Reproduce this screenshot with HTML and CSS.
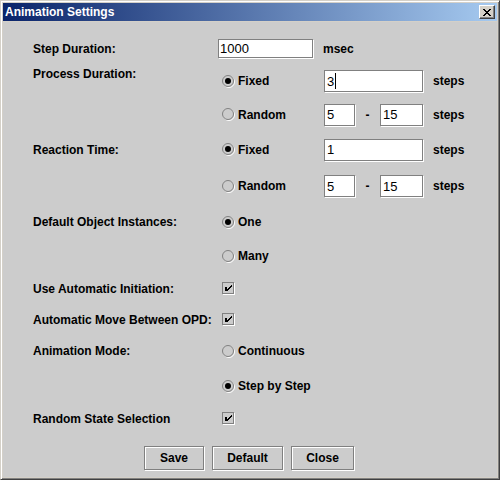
FILE: index.html
```html
<!DOCTYPE html>
<html>
<head>
<meta charset="utf-8">
<link rel="stylesheet" href="styles.css">
</head>
<body>
<div class="window">
  <div class="titlebar">
    <span class="title">Animation Settings</span>
    <span class="close"><svg width="8" height="7" viewBox="0 0 8 7" shape-rendering="crispEdges"><path d="M0 0h2v1H0z M6 0h2v1H6z M1 1h2v1H1z M5 1h2v1H5z M2 2h4v1H2z M3 3h2v1H3z M2 4h4v1H2z M1 5h2v1H1z M5 5h2v1H5z M0 6h2v1H0z M6 6h2v1H6z" fill="#000"/></svg></span>
  </div>
  <div class="content">
    <div class="form">
      <div class="lbl">Step Duration:</div>
      <div class="c2"><div class="field f-step">1000</div></div>
      <div class="c3 unit msec">msec</div>

      <div class="lbl top">Process Duration:</div>
      <div class="c2 opt"><svg class="radio" width="13" height="13" viewBox="0 0 13 13"><circle cx="7" cy="7" r="5.5" fill="none" stroke="#fff"/><circle cx="6" cy="6" r="5.5" fill="#ccc" stroke="#808080"/><circle cx="6" cy="6" r="3" fill="#000"/></svg><span>Fixed</span></div>
      <div class="c3"><div class="field f-wide">3<span class="caret"></span></div></div>
      <div class="c4 unit">steps</div>

      <div class="c2 opt"><svg class="radio" width="13" height="13" viewBox="0 0 13 13"><circle cx="7" cy="7" r="5.5" fill="none" stroke="#fff"/><circle cx="6" cy="6" r="5.5" fill="#ccc" stroke="#808080"/></svg><span>Random</span></div>
      <div class="c3 range"><div class="field f-min">5</div><span class="dash">-</span><div class="field f-max">15</div></div>
      <div class="c4 unit">steps</div>

      <div class="lbl">Reaction Time:</div>
      <div class="c2 opt"><svg class="radio" width="13" height="13" viewBox="0 0 13 13"><circle cx="7" cy="7" r="5.5" fill="none" stroke="#fff"/><circle cx="6" cy="6" r="5.5" fill="#ccc" stroke="#808080"/><circle cx="6" cy="6" r="3" fill="#000"/></svg><span>Fixed</span></div>
      <div class="c3"><div class="field f-wide">1</div></div>
      <div class="c4 unit">steps</div>

      <div class="c2 opt"><svg class="radio" width="13" height="13" viewBox="0 0 13 13"><circle cx="7" cy="7" r="5.5" fill="none" stroke="#fff"/><circle cx="6" cy="6" r="5.5" fill="#ccc" stroke="#808080"/></svg><span>Random</span></div>
      <div class="c3 range"><div class="field f-min">5</div><span class="dash">-</span><div class="field f-max">15</div></div>
      <div class="c4 unit">steps</div>

      <div class="lbl">Default Object Instances:</div>
      <div class="cspan opt"><svg class="radio" width="13" height="13" viewBox="0 0 13 13"><circle cx="7" cy="7" r="5.5" fill="none" stroke="#fff"/><circle cx="6" cy="6" r="5.5" fill="#ccc" stroke="#808080"/><circle cx="6" cy="6" r="3" fill="#000"/></svg><span>One</span></div>

      <div class="cspan opt"><svg class="radio" width="13" height="13" viewBox="0 0 13 13"><circle cx="7" cy="7" r="5.5" fill="none" stroke="#fff"/><circle cx="6" cy="6" r="5.5" fill="#ccc" stroke="#808080"/></svg><span>Many</span></div>

      <div class="lbl">Use Automatic Initiation:</div>
      <div class="cspan opt"><svg class="check" width="13" height="13" viewBox="0 0 13 13" shape-rendering="crispEdges"><rect x="1.5" y="1.5" width="11" height="11" fill="none" stroke="#fff"/><rect x="0.5" y="0.5" width="11" height="11" fill="#ccc" stroke="#808080"/><path d="M3 5h2v4H3z M9 3h1v2H9z M8 4h1v2H8z M7 5h1v2H7z M6 6h1v2H6z M5 7h1v2H5z" fill="#000"/></svg></div>

      <div class="lbl">Automatic Move Between OPD:</div>
      <div class="cspan opt"><svg class="check" width="13" height="13" viewBox="0 0 13 13" shape-rendering="crispEdges"><rect x="1.5" y="1.5" width="11" height="11" fill="none" stroke="#fff"/><rect x="0.5" y="0.5" width="11" height="11" fill="#ccc" stroke="#808080"/><path d="M3 5h2v4H3z M9 3h1v2H9z M8 4h1v2H8z M7 5h1v2H7z M6 6h1v2H6z M5 7h1v2H5z" fill="#000"/></svg></div>

      <div class="lbl">Animation Mode:</div>
      <div class="cspan opt"><svg class="radio" width="13" height="13" viewBox="0 0 13 13"><circle cx="7" cy="7" r="5.5" fill="none" stroke="#fff"/><circle cx="6" cy="6" r="5.5" fill="#ccc" stroke="#808080"/></svg><span>Continuous</span></div>

      <div class="cspan opt"><svg class="radio" width="13" height="13" viewBox="0 0 13 13"><circle cx="7" cy="7" r="5.5" fill="none" stroke="#fff"/><circle cx="6" cy="6" r="5.5" fill="#ccc" stroke="#808080"/><circle cx="6" cy="6" r="3" fill="#000"/></svg><span>Step by Step</span></div>

      <div class="lbl">Random State Selection</div>
      <div class="cspan opt"><svg class="check" width="13" height="13" viewBox="0 0 13 13" shape-rendering="crispEdges"><rect x="1.5" y="1.5" width="11" height="11" fill="none" stroke="#fff"/><rect x="0.5" y="0.5" width="11" height="11" fill="#ccc" stroke="#808080"/><path d="M3 5h2v4H3z M9 3h1v2H9z M8 4h1v2H8z M7 5h1v2H7z M6 6h1v2H6z M5 7h1v2H5z" fill="#000"/></svg></div>
    </div>
    <div class="buttons">
      <button class="btn b-save">Save</button>
      <button class="btn b-default">Default</button>
      <button class="btn b-close">Close</button>
    </div>
  </div>
</div>
</body>
</html>
```
FILE: styles.css
```css
body {
  margin: 0;
}

.window {
  width: 500px;
  height: 480px;
  box-sizing: border-box;
  border: 1px solid;
  border-color: #d4d0c8 #404040 #404040 #d4d0c8;
  box-shadow: inset 1px 1px 0 #ffffff, inset -1px -1px 0 #808080;
  padding: 2px;
  background: #d4d0c8;
  display: flex;
  flex-direction: column;
  font-family: "Liberation Sans", Arial, sans-serif;
  color: #000;
}

.titlebar {
  height: 18px;
  flex: none;
  background: linear-gradient(to right, #0a246a, #a6caf0);
  display: flex;
  align-items: center;
  justify-content: space-between;
  padding: 0 2px;
}

.title {
  color: #fff;
  font-weight: bold;
  font-size: 12px;
  line-height: 14px;
}

.close {
  width: 16px;
  height: 14px;
  box-sizing: border-box;
  background: #d4d0c8;
  border: 1px solid;
  border-color: #ffffff #404040 #404040 #ffffff;
  box-shadow: inset -1px -1px 0 #808080;
  display: flex;
  align-items: center;
  justify-content: center;
  padding-right: 1px;
}

.close svg {
  display: block;
}

.content {
  flex: 1;
  background: #cccccc;
  margin-top: 1px;
  padding-top: 14px;
}

.form {
  display: grid;
  grid-template-columns: 185px 106px 109px 1fr;
  grid-template-rows: 25px 40px 27px 43px 30px 42px 26px 39px 23px 40px 30px 35px;
  align-items: center;
  padding-left: 30px;
  font-size: 12px;
  font-weight: bold;
  line-height: 14px;
}

.lbl {
  grid-column: 1;
  white-space: nowrap;
}

.lbl.top {
  align-self: start;
  margin-top: 6px;
}

.c2 {
  grid-column: 2;
}

.c3 {
  grid-column: 3;
}

.c4 {
  grid-column: 4;
}

.cspan {
  grid-column: 2 / 5;
}

.unit.msec {
  margin-left: -1px;
}

.opt {
  display: flex;
  align-items: center;
  gap: 3px;
  padding-left: 4px;
}

.opt svg {
  display: block;
  flex: none;
}

.field {
  box-sizing: border-box;
  background: #ffffff;
  border: 1px solid #808080;
  box-shadow: 1px 1px 0 #ffffff;
  font-size: 13px;
  font-weight: normal;
  line-height: 15px;
  padding-left: 2px;
  display: flex;
  align-items: center;
}

.f-step {
  width: 95px;
  height: 19px;
  padding-left: 1px;
}

.f-wide {
  width: 99px;
  height: 22px;
}

.f-min {
  width: 31px;
  height: 22px;
}

.f-max {
  width: 43px;
  height: 22px;
}

.caret {
  display: inline-block;
  width: 1px;
  height: 16px;
  background: #000;
  margin-left: 1px;
}

.range {
  display: flex;
  align-items: center;
}

.dash {
  width: 25px;
  text-align: center;
}

.buttons {
  display: flex;
  justify-content: center;
  gap: 8px;
  margin-top: 10px;
  padding-right: 2px;
}

.btn {
  box-sizing: border-box;
  height: 24px;
  margin: 0;
  padding: 0;
  background: #cccccc;
  border: 1px solid #808080;
  box-shadow: inset 1px 1px 0 #ffffff, 1px 1px 0 #ffffff;
  font-family: "Liberation Sans", Arial, sans-serif;
  font-size: 12px;
  font-weight: bold;
  color: #000;
  border-radius: 0;
}

.b-save {
  width: 60px;
}

.b-default {
  width: 71px;
}

.b-close {
  width: 63px;
}
```
